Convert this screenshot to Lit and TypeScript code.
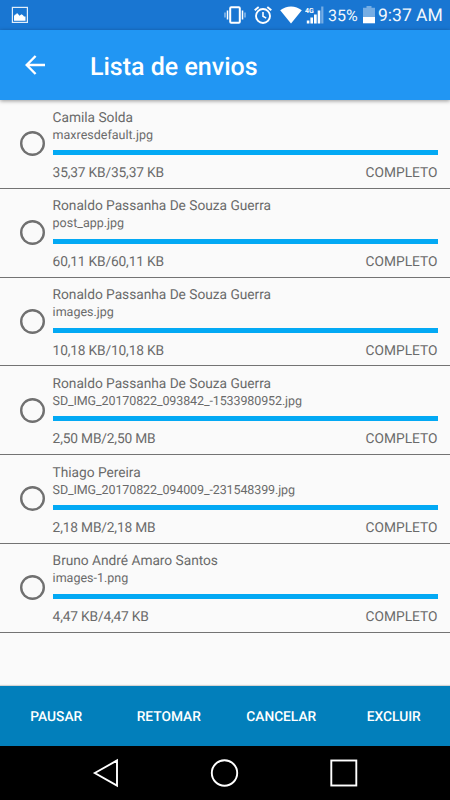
import { LitElement, html, css } from "lit";
import { customElement, property } from "lit/decorators.js";
import { classMap } from "lit/directives/class-map.js";

interface Upload {
  name: string;
  file: string;
  size: string;
}

const uploads: Upload[] = [
  { name: "Camila Solda", file: "maxresdefault.jpg", size: "35,37 KB" },
  { name: "Ronaldo Passanha De Souza Guerra", file: "post_app.jpg", size: "60,11 KB" },
  { name: "Ronaldo Passanha De Souza Guerra", file: "images.jpg", size: "10,18 KB" },
  { name: "Ronaldo Passanha De Souza Guerra", file: "SD_IMG_20170822_093842_-1533980952.jpg", size: "2,50 MB" },
  { name: "Thiago Pereira", file: "SD_IMG_20170822_094009_-231548399.jpg", size: "2,18 MB" },
  { name: "Bruno André Amaro Santos", file: "images-1.png", size: "4,47 KB" },
];

@customElement("status-bar")
export class StatusBar extends LitElement {
  static styles = css`
    :host {
      display: flex;
      align-items: center;
      height: 30px;
      box-sizing: border-box;
      padding: 0 8px 0 11px;
      background: #1976d2;
      color: #fff;
    }
    svg { display: block; flex: none; }
    .picture { margin-right: auto; }
    .vibrate { margin-right: 8px; }
    .alarm { margin-right: 8px; }
    .wifi { margin-right: 3px; }
    .signal { margin-right: 4px; }
    .pct { font-size: 16px; width: 31px; white-space: nowrap; line-height: 30px; margin: 1px 4px 0 0; opacity: 0.95; }
    .battery { margin-right: 3px; }
    .time { font-size: 17.5px; width: 64px; white-space: nowrap; line-height: 30px; margin-top: 2px; opacity: 0.95; }
    .net { font: bold 7px Roboto, sans-serif; }
  `;
  render() {
    return html`
      <svg class="picture" width="18" height="18" viewBox="0 0 18 18">
        <rect x="1.400" y="1.400" width="15" height="15" fill="none" stroke="#e3eefa" stroke-width="1.200" />
        <path d="M3 14.800V10l1-1.600h1l1-1.400 1.500 1.400 1 1.300 2-1.500 1.500 1 1 1.200h1.500v4.400z" fill="#fff" />
      </svg>
      <svg class="vibrate" width="22" height="20" viewBox="0 0 22 20" fill="none" stroke="#fff">
        <rect x="6.200" y="2.200" width="9.600" height="15.600" rx="1" stroke-width="2" />
        <path d="M3.500 5.500v9M18.500 5.500v9" stroke-width="1.500" />
        <path d="M1 7.500v5M21 7.500v5" stroke-width="1.100" opacity=".7" />
      </svg>
      <svg class="alarm" width="18" height="20" viewBox="0 0 18 20" fill="none" stroke="#fff">
        <circle cx="9" cy="11" r="7" stroke-width="1.900" />
        <path d="M.7 5.200l4-3.300M17.300 5.200l-4-3.300" stroke-width="1.900" />
        <path d="M9 7v4.300l3.200 1.800" stroke-width="1.600" />
      </svg>
      <svg class="wifi" width="22" height="18" viewBox="0 0 22 18">
        <path d="M.2 4.300Q5 .5 11 .5t10.800 3.800L11 17.500z" fill="#fff" />
      </svg>
      <svg class="signal" width="19" height="20" viewBox="0 0 19 20">
        <text class="net" x="0" y="7.600" fill="#fff">4G</text>
        <path d="M1.800 15.500h2.600v3H1.800zM5.400 12.500H8v6H5.400zM9 9.500h2.700v9H9zM12.700 5.500h2.600v13h-2.600z" fill="#fff" />
        <path d="M16.200 1.500h2.200v17h-2.200z" fill="#75ade4" />
      </svg>
      <span class="pct">35%</span>
      <svg class="battery" width="12" height="18" viewBox="0 0 12 18">
        <path d="M3.500 0h5v1.800H12V11H0V1.800h3.500z" fill="#75ade4" />
        <path d="M0 11h12v6.300H0z" fill="#fff" />
      </svg>
      <span class="time">9:37 AM</span>
    `;
  }
}

@customElement("upload-row")
export class UploadRow extends LitElement {
  @property({ attribute: false }) upload!: Upload;
  static styles = css`
    :host {
      display: flex;
      height: 88.75px;
      box-sizing: border-box;
      padding: 8px 12.500px 0 20px;
      border-bottom: 1px solid #737373;
      color: #6a6a6a;
    }
    .radio {
      box-sizing: border-box;
      width: 25px;
      height: 25px;
      margin: 23.300px 7.600px 0 0;
      box-shadow: inset 0 0 0 2.400px #707070;
      border-radius: 50%;
      flex: none;
    }
    .body { flex: 1; min-width: 0; }
    .name { font-size: 13.750px; line-height: 18px; letter-spacing: -0.030px; padding-top: 0.500px; }
    .file { font-size: 12.500px; line-height: 16px; margin-top: 1px; }
    .long { letter-spacing: -0.110px; }
    .bar { height: 5px; background: #03a9f4; margin-top: 6.500px; }
    .foot { display: flex; justify-content: space-between; font-size: 13.750px; line-height: 18px; margin-top: 9.200px; }
    .size { letter-spacing: -0.170px; }
  `;
  render() {
    const u = this.upload;
    return html`
      <div class="radio"></div>
      <div class="body">
        <div class="name">${u.name}</div>
        <div class=${classMap({ file: true, long: u.file.length > 20 })}>${u.file}</div>
        <div class="bar"></div>
        <div class="foot"><span class="size">${u.size}/${u.size}</span><span>COMPLETO</span></div>
      </div>
    `;
  }
}

@customElement("app-root")
export class AppRoot extends LitElement {
  static styles = css`
    :host {
      display: flex;
      flex-direction: column;
      width: 450px;
      height: 800px;
      overflow: hidden;
      background: #fafafa;
      font-family: Roboto, sans-serif;
      text-rendering: geometricPrecision;
    }
    .toolbar {
      display: flex;
      align-items: center;
      height: 70px;
      flex: none;
      box-sizing: border-box;
      padding: 0 0 0 25px;
      background: #2196f3;
      color: #fff;
      box-shadow: 0 1px 4px rgba(0, 0, 0, 0.4);
      z-index: 1;
    }
    .title { font-size: 25px; font-weight: 500; margin: 5px 0 0 45px; }
    .list { flex: 1; }
    .actions {
      display: grid;
      grid-template-columns: repeat(4, 1fr);
      align-items: center;
      height: 60px;
      flex: none;
      background: #027fbb;
      color: #fff;
      text-align: center;
      font-size: 13.750px;
      font-weight: 500;
      box-shadow: 0 -1px 1px rgba(0, 0, 0, 0.15);
    }
    .actions span { padding-top: 2px; }
    .nav { height: 54px; flex: none; background: #000; }
    .nav svg { display: block; }
  `;
  render() {
    return html`
      <status-bar></status-bar>
      <div class="toolbar">
        <svg width="20" height="20" viewBox="0 0 20 20" fill="none" stroke="#fff" stroke-width="2.400">
          <path d="M20 10H2M10.600 1L1.700 10l8.900 9" />
        </svg>
        <span class="title">Lista de envios</span>
      </div>
      <div class="list">${uploads.map((u) => html`<upload-row .upload=${u}></upload-row>`)}</div>
      <div class="actions">
        <span>PAUSAR</span><span>RETOMAR</span><span>CANCELAR</span><span>EXCLUIR</span>
      </div>
      <div class="nav">
        <svg width="450" height="54" viewBox="0 0 450 54" fill="none" stroke="#fff" stroke-width="1.900">
          <path d="M94.800 27L117 14.500v25z" />
          <circle cx="224.500" cy="27" r="12.700" />
          <rect x="331.300" y="14.500" width="25" height="25" />
        </svg>
      </div>
    `;
  }
}
